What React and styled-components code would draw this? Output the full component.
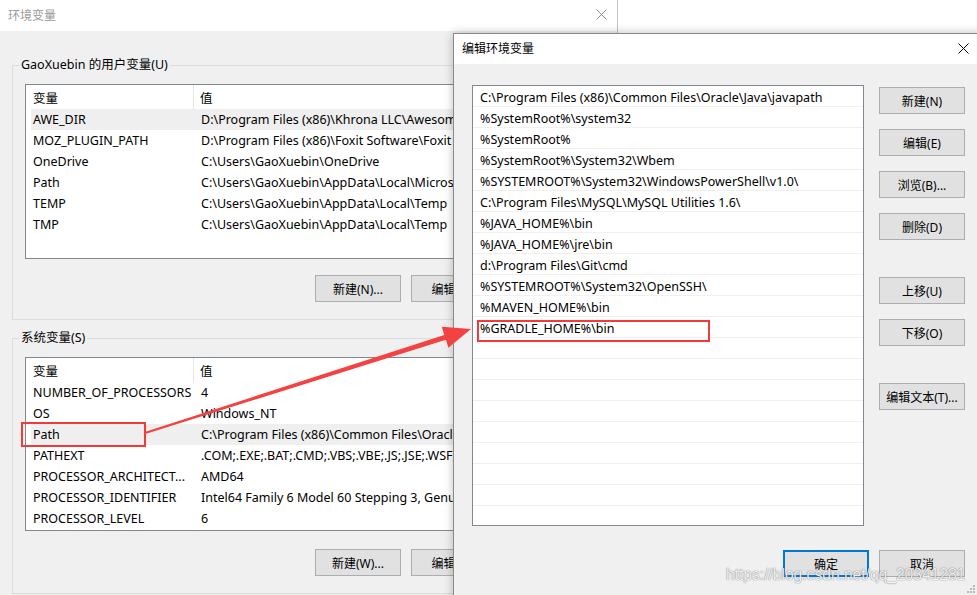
import React from 'react';
import styled, { createGlobalStyle } from 'styled-components';

const FONT = `"Noto Sans", "Noto Sans CJK SC", sans-serif`;

const GlobalStyle = createGlobalStyle`
  html, body {
    margin: 0;
    padding: 0;
    background: #fff;
  }
`;

// Desktop and windows
const Desktop = styled.div`
  position: relative;
  width: 977px;
  height: 595px;
  overflow: hidden;
  background: #fff;
  font-family: ${FONT};
  font-size: 12.5px;
  color: #000;
`;

const Window = styled.div`
  position: absolute;
  left: ${p => p.$left}px;
  top: ${p => p.$top}px;
  width: ${p => p.$width}px;
  height: ${p => p.$height}px;
  box-sizing: border-box;
  background: #f0f0f0;
  border: 1px solid ${p => (p.$active ? '#8a8a8a' : '#c4c4c4')};
  box-shadow: ${p => (p.$active ? '0 0 9px rgba(0,0,0,0.25)' : 'none')};
  display: flex;
  flex-direction: column;
`;

const TitleBar = styled.div`
  height: ${p => p.$height}px;
  flex-shrink: 0;
  box-sizing: border-box;
  padding-bottom: 2px;
  background: #fff;
  display: flex;
  align-items: center;
  justify-content: space-between;
  padding-left: 8px;
`;

const Title = styled.span`
  color: ${p => (p.$inactive ? '#9a9a9a' : '#000')};
  font-size: 12px;
`;

const CloseButton = styled.div`
  width: ${p => p.$width}px;
  height: 100%;
  display: flex;
  align-items: center;
  justify-content: center;
`;

// Background dialog parts
const Group = styled.fieldset`
  margin: ${p => p.$mt}px 11px 0 12px;
  padding: 11px 12px 17px;
  border: 1px solid #dcdcdc;
  min-width: 0;
`;

const Legend = styled.legend`
  padding: 0 2px;
  margin-left: -6px;
  line-height: 16px;
  font-size: 12.5px;
`;

const ListView = styled.div`
  height: ${p => p.$height}px;
  box-sizing: border-box;
  border: 1px solid #828790;
  background: #fff;
  overflow: hidden;
`;

const HeaderRow = styled.div`
  height: 24px;
  display: flex;
  align-items: center;
`;

const HeaderCell = styled.div`
  width: ${p => (p.$first ? '168px' : 'auto')};
  box-sizing: border-box;
  height: 100%;
  display: flex;
  align-items: center;
  padding-left: ${p => (p.$first ? 7 : 6)}px;
  border-right: ${p => (p.$first ? '1px solid #e5e5e5' : 'none')};
`;

const Row = styled.div`
  height: 21px;
  margin-left: 5px;
  display: flex;
  align-items: center;
  background: ${p => (p.$selected ? '#efefef' : 'transparent')};
`;

const Cell = styled.div`
  flex: ${p => (p.$first ? '0 0 163px' : '1 1 auto')};
  box-sizing: border-box;
  padding-left: ${p => (p.$first ? 2 : 7)}px;
  white-space: nowrap;
  overflow: hidden;
`;

const ButtonRow = styled.div`
  margin-top: ${p => p.$gap}px;
  display: flex;
  justify-content: flex-end;
  gap: 10px;
`;

const Button = styled.button`
  width: 86px;
  height: 27px;
  box-sizing: border-box;
  padding: 0;
  background: #e1e1e1;
  border: ${p => (p.$default ? '2px solid #0078d7' : '1px solid #adadad')};
  font-family: ${FONT};
  font-size: 12px;
  color: #000;
`;

// Edit dialog parts
const EditBody = styled.div`
  display: grid;
  grid-template-columns: 392px 86px;
  column-gap: 15px;
  padding: 21px 0 0 18px;
`;

const PathList = styled.div`
  height: 441px;
  box-sizing: border-box;
  border: 1px solid #828790;
  background: #fff;
  overflow: hidden;
`;

const PathItem = styled.div`
  height: 21px;
  box-sizing: border-box;
  border-bottom: 1px solid #f0f0f0;
  padding: 3px 0 0 7px;
  display: flex;
  align-items: center;
  white-space: nowrap;
`;

const SideButtons = styled.div`
  margin-top: 2px;
  display: flex;
  flex-direction: column;
  gap: 37px;
`;

const ButtonGroup = styled.div`
  display: flex;
  flex-direction: column;
  gap: 15px;
`;

const Footer = styled.div`
  grid-column: 1 / -1;
  margin-top: 24px;
  display: flex;
  justify-content: flex-end;
  gap: 10px;
`;

// Annotations on top
const RedBox = styled.div`
  position: absolute;
  left: ${p => p.$x}px;
  top: ${p => p.$y}px;
  width: ${p => p.$w}px;
  height: ${p => p.$h}px;
  box-sizing: border-box;
  border: 2px solid #f23a3a;
  pointer-events: none;
`;

const Overlay = styled.svg`
  position: absolute;
  left: 0;
  top: 0;
  pointer-events: none;
`;

const Watermark = styled.div`
  position: absolute;
  left: 726px;
  top: 566px;
  font-family: "Liberation Sans", Arial, sans-serif;
  font-size: 15.6px;
  color: rgba(255, 255, 255, 0.92);
  text-shadow: 0 0 1px rgba(0, 0, 0, 0.55), 0 0 2px rgba(0, 0, 0, 0.18);
  white-space: nowrap;
  pointer-events: none;
`;

const userVars = [
  ['AWE_DIR', 'D:\\Program Files (x86)\\Khrona LLC\\Awesomium SDK\\1.6.6\\', true],
  ['MOZ_PLUGIN_PATH', 'D:\\Program Files (x86)\\Foxit Software\\Foxit Reader\\plugins\\'],
  ['OneDrive', 'C:\\Users\\GaoXuebin\\OneDrive'],
  ['Path', 'C:\\Users\\GaoXuebin\\AppData\\Local\\Microsoft\\WindowsApps;'],
  ['TEMP', 'C:\\Users\\GaoXuebin\\AppData\\Local\\Temp'],
  ['TMP', 'C:\\Users\\GaoXuebin\\AppData\\Local\\Temp'],
];

const systemVars = [
  ['NUMBER_OF_PROCESSORS', '4'],
  ['OS', 'Windows_NT'],
  ['Path', 'C:\\Program Files (x86)\\Common Files\\Oracle\\Java\\javapath;', true],
  ['PATHEXT', '.COM;.EXE;.BAT;.CMD;.VBS;.VBE;.JS;.JSE;.WSF;.WSH;.MSC'],
  ['PROCESSOR_ARCHITECT...', 'AMD64'],
  ['PROCESSOR_IDENTIFIER', 'Intel64 Family 6 Model 60 Stepping 3, GenuineIntel'],
  ['PROCESSOR_LEVEL', '6'],
];

const paths = [
  'C:\\Program Files (x86)\\Common Files\\Oracle\\Java\\javapath',
  '%SystemRoot%\\system32',
  '%SystemRoot%',
  '%SystemRoot%\\System32\\Wbem',
  '%SYSTEMROOT%\\System32\\WindowsPowerShell\\v1.0\\',
  'C:\\Program Files\\MySQL\\MySQL Utilities 1.6\\',
  '%JAVA_HOME%\\bin',
  '%JAVA_HOME%\\jre\\bin',
  'd:\\Program Files\\Git\\cmd',
  '%SYSTEMROOT%\\System32\\OpenSSH\\',
  '%MAVEN_HOME%\\bin',
  '%GRADLE_HOME%\\bin',
];

const CloseIcon = ({ color }) => (
  <svg width="11" height="11" viewBox="0 0 11 11">
    <path d="M0.5 0.5 L10.5 10.5 M10.5 0.5 L0.5 10.5" stroke={color} strokeWidth="1" />
  </svg>
);

function VarList({ height, rows }) {
  return (
    <ListView $height={height}>
      <HeaderRow>
        <HeaderCell $first>变量</HeaderCell>
        <HeaderCell>值</HeaderCell>
      </HeaderRow>
      {rows.map(([name, value, selected]) => (
        <Row key={name} $selected={selected}>
          <Cell $first>{name}</Cell>
          <Cell>{value}</Cell>
        </Row>
      ))}
    </ListView>
  );
}

export default function App() {
  const items = [...paths];
  while (items.length < 21) items.push('');

  return (
    <Desktop>
      <GlobalStyle />

      <Window $left={-1} $top={-1} $width={619} $height={640}>
        <TitleBar $height={31}>
          <Title $inactive>环境变量</Title>
          <CloseButton $width={32}>
            <CloseIcon color="#8f8f8f" />
          </CloseButton>
        </TitleBar>

        <Group $mt={26}>
          <Legend>GaoXuebin 的用户变量(U)</Legend>
          <VarList height={175} rows={userVars} />
          <ButtonRow $gap={16}>
            <Button>新建(N)...</Button>
            <Button>编辑(I)...</Button>
            <Button>删除(D)</Button>
          </ButtonRow>
        </Group>

        <Group $mt={10}>
          <Legend>系统变量(S)</Legend>
          <VarList height={174} rows={systemVars} />
          <ButtonRow $gap={18}>
            <Button>新建(W)...</Button>
            <Button>编辑(I)...</Button>
            <Button>删除(L)</Button>
          </ButtonRow>
        </Group>
      </Window>

      <Window $left={453} $top={33} $width={531} $height={600} $active>
        <TitleBar $height={30}>
          <Title>编辑环境变量</Title>
          <CloseButton $width={40}>
            <CloseIcon color="#000" />
          </CloseButton>
        </TitleBar>

        <EditBody>
          <PathList>
            {items.map((p, i) => (
              <PathItem key={i}>{p}</PathItem>
            ))}
          </PathList>

          <SideButtons>
            <ButtonGroup>
              <Button>新建(N)</Button>
              <Button>编辑(E)</Button>
              <Button>浏览(B)...</Button>
              <Button>删除(D)</Button>
            </ButtonGroup>
            <ButtonGroup>
              <Button>上移(U)</Button>
              <Button>下移(O)</Button>
            </ButtonGroup>
            <ButtonGroup>
              <Button>编辑文本(T)...</Button>
            </ButtonGroup>
          </SideButtons>

          <Footer>
            <Button $default>确定</Button>
            <Button>取消</Button>
          </Footer>
        </EditBody>
      </Window>

      <RedBox $x={21} $y={422} $w={125} $h={25} />
      <RedBox $x={477} $y={320} $w={233} $h={22} />

      <Overlay width="977" height="595" viewBox="0 0 977 595">
        <polygon
          points="144.7,432 444.3,334.9 441.8,326.8 471,329 448.4,347.8 445.9,339.7 145.3,434"
          fill="#f44141"
        />
        <g fill="#b8b8b8">
          <rect x="973" y="585" width="2" height="2" />
          <rect x="970" y="588" width="2" height="2" />
          <rect x="973" y="588" width="2" height="2" />
          <rect x="967" y="591" width="2" height="2" />
          <rect x="970" y="591" width="2" height="2" />
          <rect x="973" y="591" width="2" height="2" />
        </g>
      </Overlay>

      <Watermark>https://blog.csdn.net/qq_20341281</Watermark>
    </Desktop>
  );
}
